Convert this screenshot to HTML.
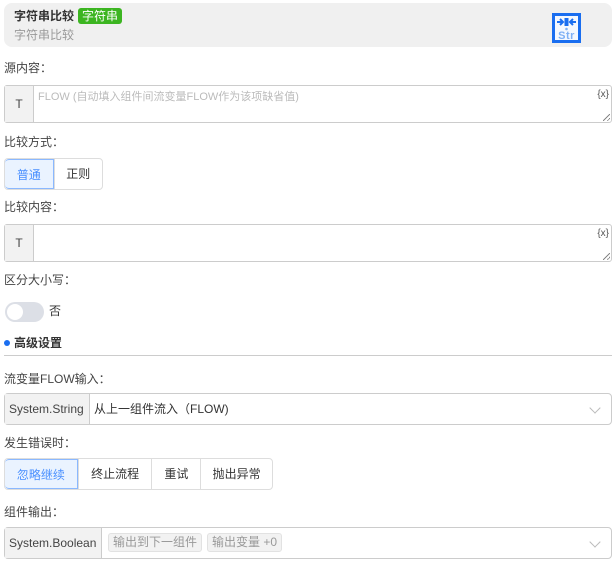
<!DOCTYPE html>
<html><head><meta charset="utf-8"><style>
*{box-sizing:border-box;margin:0;padding:0}
body{width:616px;height:563px;background:#fff;font-family:"Liberation Sans","Noto Sans CJK SC",sans-serif;font-size:12px;color:#333;position:relative;overflow:hidden}
.a{position:absolute}
.lbl{position:absolute;left:4px;font-size:12px;color:#444;line-height:14px}
.ta{position:absolute;left:4px;width:608px;height:38px;border:1px solid #ccc;border-radius:3px;background:#fff}
.ta .p{position:absolute;left:0;top:0;bottom:0;width:29px;background:#f2f2f2;border-right:1px solid #ccc;text-align:center;line-height:36px;color:#444}
.ta .x{position:absolute;right:2px;top:3px;font-size:10px;color:#555}
.ta .r{position:absolute;right:1px;bottom:1px;width:7px;height:7px;background:linear-gradient(135deg,transparent 45%,#888 45%,#888 55%,transparent 55%,transparent 75%,#888 75%,#888 85%,transparent 85%)}
.bg{position:absolute;display:flex;height:32px;border:1px solid #ddd;border-radius:4px;overflow:hidden}
.bg div{border-left:1px solid #ddd;text-align:center;line-height:30px;font-size:12px;color:#333}
.bg div:first-child{border-left:none}
.bg .on{background:#eaf3ff;color:#4a90ff;border:1px solid #8ab8ff;border-radius:4px 0 0 4px}
.sel{position:absolute;left:4px;width:608px;height:32px;border:1px solid #ccc;border-radius:4px;background:#fff}
.sel .p{position:absolute;left:0;top:0;bottom:0;background:#f2f2f2;border-right:1px solid #ccc;line-height:30px;padding:0 4px;color:#444}
.chev{position:absolute;right:12px;top:10px;width:8px;height:8px;border-right:1px solid #bbb;border-bottom:1px solid #bbb;transform:rotate(45deg)}
.tag{display:inline-block;background:#f2f2f2;border:1px solid #e2e2e2;border-radius:3px;color:#999;padding:0 4px;line-height:17px;margin-top:5px;margin-right:5px}
</style></head><body>
<div class="a" style="left:4px;top:3px;width:608px;height:44px;background:#f0f0f0;border-radius:8px"></div>
<div class="a" style="left:14px;top:8px;font-weight:bold;font-size:12px;line-height:16px;color:#333">字符串比较</div>
<div class="a" style="left:78px;top:8px;width:44px;height:16px;background:#3cb521;border-radius:3px;color:#fff;font-size:12px;line-height:16px;text-align:center">字符串</div>
<div class="a" style="left:14px;top:28px;color:#999;font-size:12px;line-height:14px">字符串比较</div>
<svg class="a" style="left:552px;top:13px" width="29" height="30" viewBox="0 0 29 30">
<rect x="1.5" y="1.5" width="26" height="27" fill="#f4f8ff" stroke="#1a6ef0" stroke-width="3"/>
<path d="M5 9h6M8 6l3 3-3 3M24 9h-6M21 6l-3 3 3 3M13.5 5v8M15.5 5v8" stroke="#1a6ef0" stroke-width="2" fill="none"/>
<circle cx="14.5" cy="16" r="1.3" fill="#7fb0f5"/>
<text x="14.5" y="26" font-size="11" font-weight="bold" fill="#7fb0f5" text-anchor="middle" font-family="Liberation Sans" letter-spacing="0.5">Str</text>
</svg>

<div class="lbl" style="top:61px">源内容：</div>
<div class="ta" style="top:85px"><div class="p">T</div><div class="a" style="left:33px;top:2px;color:#bbb;font-size:11px">FLOW (自动填入组件间流变量FLOW作为该项缺省值)</div><div class="x">{x}</div><div class="r"></div></div>

<div class="lbl" style="top:135px">比较方式：</div>
<div class="bg" style="left:4px;top:158px;width:99px"><div class="on" style="width:49px">普通</div><div style="width:49px">正则</div></div>

<div class="lbl" style="top:200px">比较内容：</div>
<div class="ta" style="top:224px"><div class="p">T</div><div class="x">{x}</div><div class="r"></div></div>

<div class="lbl" style="top:273px">区分大小写：</div>
<div class="a" style="left:5px;top:302px;width:39px;height:20px;background:#dcdfe6;border-radius:10px"><div class="a" style="left:2px;top:2px;width:16px;height:16px;background:#fff;border-radius:50%"></div></div>
<div class="a" style="left:49px;top:304px;line-height:14px">否</div>

<div class="a" style="left:4px;top:340px;width:6px;height:6px;background:#1a6ef0;border-radius:50%"></div>
<div class="a" style="left:14px;top:336px;font-weight:bold;line-height:14px">高级设置</div>
<div class="a" style="left:4px;top:355px;width:608px;height:1px;background:#ccc"></div>

<div class="lbl" style="top:372px">流变量FLOW输入：</div>
<div class="sel" style="top:393px"><div class="p" style="width:85px">System.String</div><div class="a" style="left:89px;top:0;line-height:30px;color:#333">从上一组件流入（FLOW)</div><div class="chev"></div></div>

<div class="lbl" style="top:436px">发生错误时：</div>
<div class="bg" style="left:4px;top:458px;width:269px"><div class="on" style="width:73px">忽略继续</div><div style="width:74px">终止流程</div><div style="width:49px">重试</div><div style="width:72px">抛出异常</div></div>

<div class="lbl" style="top:505px">组件输出：</div>
<div class="sel" style="top:527px"><div class="p" style="width:97px">System.Boolean</div><div class="a" style="left:103px;top:0"><span class="tag">输出到下一组件</span><span class="tag">输出变量 +0</span></div><div class="chev"></div></div>
</body></html>
